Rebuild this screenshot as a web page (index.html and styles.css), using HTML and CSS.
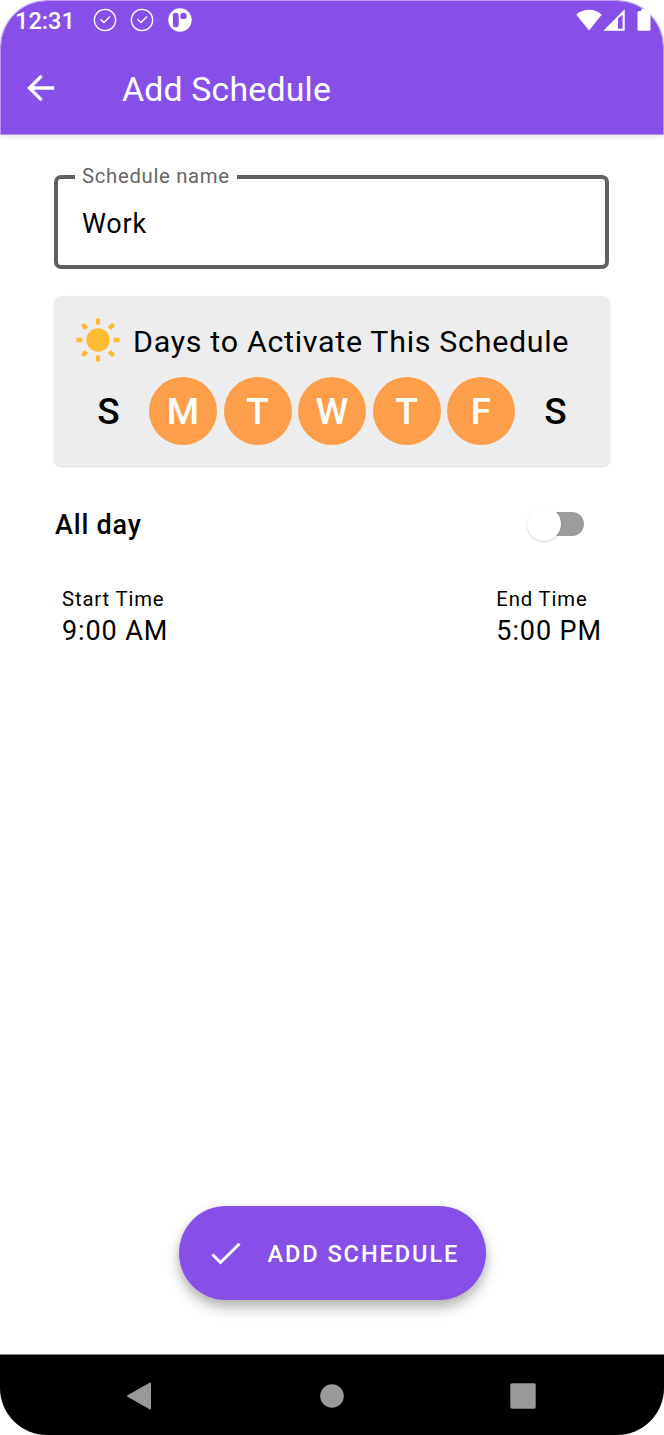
FILE: index.html
```html
<!DOCTYPE html>
<html lang="en">

<head>
    <meta charset="UTF-8">
    <meta name="viewport" content="width=device-width, initial-scale=1.0">
    <title>Add Schedule</title>
    <link rel="stylesheet" href="styles.css">
</head>

<body>
    <div class="phone">
        <header class="top">
            <div class="status-bar">
                <span class="clock">12:31</span>
                <div class="notifications">
                    <svg width="24" height="24" viewBox="0 0 24 24" fill="none" stroke="#fff" stroke-width="1.3">
                        <circle cx="12" cy="12" r="10.7" />
                        <path d="M7.5 11.2l3.5 3.3 6-6" />
                    </svg>
                    <svg width="24" height="24" viewBox="0 0 24 24" fill="none" stroke="#fff" stroke-width="1.3">
                        <circle cx="12" cy="12" r="10.7" />
                        <path d="M7.5 11.2l3.5 3.3 6-6" />
                    </svg>
                    <svg width="24" height="24" viewBox="0 0 24 24">
                        <circle cx="12" cy="12" r="11.7" fill="#fff" />
                        <rect class="cutout" x="4.9" y="4.8" width="5.8" height="14.5" rx="2.9" />
                        <circle class="cutout" cx="15.5" cy="7.9" r="3.2" />
                    </svg>
                </div>
                <div class="system-icons">
                    <svg width="26" height="22" viewBox="0 0 26 22" fill="#fff">
                        <path d="M13 21.5L.3 5.7C3.8 2.5 8.2.7 13 .7s9.2 1.8 12.7 5z" />
                    </svg>
                    <svg width="22" height="22" viewBox="0 0 22 22" fill="#fff">
                        <path fill-rule="evenodd" d="M.3 21.7L21.7.3v21.4zM15 9.5v10.2h4.6V5.5z" />
                    </svg>
                    <svg width="14" height="22" viewBox="0 0 14 22" fill="#fff">
                        <path d="M4.3 0h5.4v2H12q1.5 0 1.5 1.5v16.7q0 1.5-1.5 1.5H2q-1.5 0-1.5-1.5V3.5Q.5 2 2 2h2.3z" />
                    </svg>
                </div>
            </div>
            <div class="app-bar">
                <svg class="back" width="28" height="28" viewBox="0 0 28 28" fill="none" stroke="#fff" stroke-width="3.4">
                    <path d="M27.3 14H3M14.6 1.9L2.5 14l12.1 12.1" />
                </svg>
                <h1>Add Schedule</h1>
            </div>
        </header>

        <main>
            <fieldset class="name-field">
                <legend>Schedule name</legend>
                <input type="text" value="Work" aria-label="Schedule name">
            </fieldset>

            <section class="days-card">
                <div class="days-title">
                    <svg width="44" height="44" viewBox="-22 -22 44 44" fill="#ffbb33" stroke="#ffbb33" stroke-width="4.3">
                        <circle r="11.7" stroke="none" />
                        <path d="M0-21.6v6M0 21.6v-6M-21.6 0h6M21.6 0h-6M-15.7-15.7l4.2 4.2M15.7-15.7l-4.2 4.2M-15.7 15.7l4.2-4.2M15.7 15.7l-4.2-4.2" />
                    </svg>
                    <h2>Days to Activate This Schedule</h2>
                </div>
                <div class="days">
                    <span class="day">S</span>
                    <span class="day active">M</span>
                    <span class="day active">T</span>
                    <span class="day active">W</span>
                    <span class="day active">T</span>
                    <span class="day active">F</span>
                    <span class="day">S</span>
                </div>
            </section>

            <div class="all-day">
                <span class="all-day-label">All day</span>
                <span class="switch"><span class="thumb"></span></span>
            </div>

            <div class="times">
                <div class="time">
                    <span class="time-label">Start Time</span>
                    <span class="time-value">9:00 AM</span>
                </div>
                <div class="time">
                    <span class="time-label">End Time</span>
                    <span class="time-value">5:00 PM</span>
                </div>
            </div>

            <button class="add-button">
                <svg width="30" height="24" viewBox="0 0 30 24" fill="none" stroke="#fff" stroke-width="3">
                    <path d="M1.5 12.5l8 8L28.5 1.7" />
                </svg>
                <span>Add Schedule</span>
            </button>
        </main>

        <nav class="nav-bar">
            <svg width="26" height="28" viewBox="0 0 26 28" fill="#999" stroke="#999" stroke-width="2" stroke-linejoin="round">
                <path d="M2 14L24 1.5v25z" />
            </svg>
            <svg width="26" height="24" viewBox="0 0 26 24" fill="#999">
                <circle cx="14" cy="12" r="11.8" />
            </svg>
            <svg width="26" height="26" viewBox="0 0 26 26" fill="#999">
                <rect x=".3" y=".3" width="25.4" height="25.4" rx="2" />
            </svg>
        </nav>
    </div>
</body>

</html>
```

FILE: styles.css
```css
body {
    margin: 0;
    background-color: #fff;
    font-family: Roboto, sans-serif;
    color: #000;
}

svg {
    display: block;
    flex: none;
}

.phone {
    display: flex;
    flex-direction: column;
    width: 664px;
    height: 1435px;
}

/* status bar and app bar */
.top {
    box-sizing: border-box;
    height: 135px;
    background-color: #864fe7;
    background-clip: padding-box;
    border: 1px solid #b697f0;
    border-radius: 47px 47px 0 0;
    box-shadow: 0 2px 4px rgba(0, 0, 0, 0.12);
    color: #fff;
}

.status-bar {
    display: flex;
    align-items: center;
    height: 38px;
    padding: 0 12.5px 0 14px;
}

.clock {
    width: 77.5px;
    font-size: 23.6px;
    font-weight: 500;
    line-height: 38px;
    padding-top: 1px;
}

.notifications {
    display: flex;
    gap: 13.5px;
}

.cutout {
    fill: #864fe7;
}

.system-icons {
    display: flex;
    gap: 1px;
    margin-left: auto;
}

.system-icons svg:last-child {
    margin-left: 10.5px;
}

.app-bar {
    display: flex;
    align-items: center;
    height: 95px;
    padding-left: 26px;
}

.back {
    margin-top: 2px;
}

h1 {
    margin: 6px 0 0 67px;
    font-size: 33.8px;
    font-weight: 400;
    letter-spacing: 0.2px;
}

main {
    display: flex;
    flex-direction: column;
    flex: 1;
    padding: 29px 54px 54px;
}

/* outlined text field */
.name-field {
    box-sizing: border-box;
    height: 105px;
    margin: 0 1px 0 0;
    padding: 0 24px;
    border: 4px solid #606060;
    border-radius: 7px;
}

.name-field legend {
    margin-left: -7px;
    padding: 0 7px;
    color: #666;
    font-size: 20.3px;
    line-height: 25px;
    letter-spacing: 0.7px;
}

.name-field input {
    display: block;
    width: 100%;
    height: 70px;
    padding: 0;
    border: 0;
    outline: 0;
    background: none;
    font-family: inherit;
    font-size: 27px;
    letter-spacing: 0.8px;
}

.days-card {
    box-sizing: border-box;
    height: 170px;
    margin-top: 27px;
    padding: 22px 20.5px 0;
    background-color: #ededed;
    border-radius: 8px;
    box-shadow: 0 1px 2px rgba(0, 0, 0, 0.15);
}

.days-title {
    display: flex;
    align-items: center;
    height: 44px;
    padding-left: 1.5px;
}

h2 {
    margin: 2px 0 0 13px;
    font-size: 30.4px;
    font-weight: 400;
    letter-spacing: 0.7px;
    white-space: nowrap;
}

.days {
    display: flex;
    justify-content: space-between;
    margin-top: 15px;
}

.day {
    width: 68px;
    height: 68px;
    border-radius: 50%;
    font-size: 37px;
    font-weight: 500;
    line-height: 70px;
    text-align: center;
}

.day.active {
    background-color: #ff9e4a;
    color: #fff;
}

.all-day {
    display: flex;
    align-items: center;
    justify-content: space-between;
    height: 40px;
    margin-top: 37.5px;
    padding: 0 26px 0 1px;
    font-size: 27px;
    font-weight: 500;
    letter-spacing: 0.8px;
}

.all-day-label {
    padding-top: 3px;
}

.switch {
    display: flex;
    align-items: center;
    width: 54px;
    height: 24px;
    border-radius: 12px;
    background-color: #9c9c9c;
}

.thumb {
    flex: none;
    width: 34px;
    height: 34px;
    margin-left: -3px;
    border-radius: 50%;
    background-color: #fff;
    box-shadow: 0 1px 2px rgba(0, 0, 0, 0.2);
}

.times {
    display: flex;
    justify-content: space-between;
    margin-top: 42px;
    padding: 0 8px;
}

.time {
    display: flex;
    flex-direction: column;
}

.time-label {
    font-size: 20.3px;
    line-height: 26px;
    letter-spacing: 0.85px;
}

.time-value {
    font-size: 27px;
    line-height: 39px;
    letter-spacing: 0.9px;
}

.add-button {
    display: flex;
    align-items: center;
    align-self: center;
    box-sizing: border-box;
    width: 307px;
    height: 94px;
    margin-top: auto;
    padding: 0 0 0 32px;
    border: 0;
    border-radius: 48px;
    background-color: #864fe7;
    box-shadow: 0 8px 14px rgba(0, 0, 0, 0.25), 0 2px 8px rgba(0, 0, 0, 0.1);
    color: #fff;
    font-family: inherit;
    font-size: 23.6px;
    font-weight: 500;
    letter-spacing: 1.9px;
    text-transform: uppercase;
    white-space: nowrap;
}

.add-button svg {
    margin-top: 2px;
}

.add-button span {
    margin: 2px 0 0 27px;
}

/* android navigation buttons */
.nav-bar {
    display: flex;
    align-items: center;
    justify-content: space-between;
    box-sizing: border-box;
    height: 81px;
    padding: 1px 128px 0 126px;
    background-color: #000;
    border-top: 1px solid #808080;
    border-radius: 0 0 47px 47px;
}
```
